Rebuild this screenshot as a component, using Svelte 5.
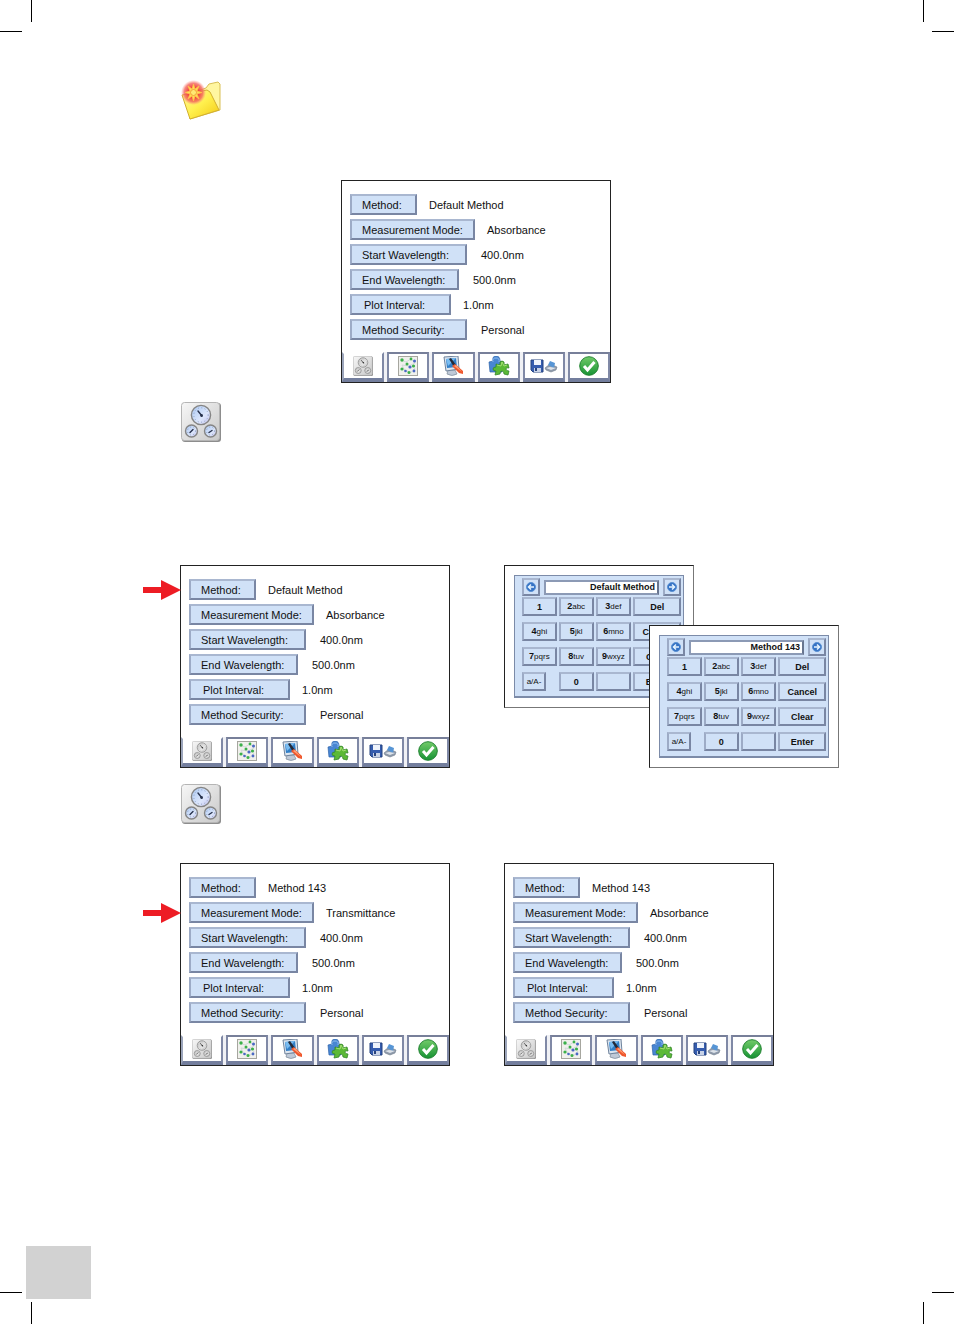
<script>
  const base = [
    { label: "Method:", value: "Default Method", size: "xs" },
    { label: "Measurement Mode:", value: "Absorbance", size: "xl" },
    { label: "Start Wavelength:", value: "400.0nm", size: "lg" },
    { label: "End Wavelength:", value: "500.0nm", size: "md" },
    { label: "Plot Interval:", value: "1.0nm", size: "sm" },
    { label: "Method Security:", value: "Personal", size: "lg" },
  ];

  // Same parameter list with the method name and mode replaced
  function withMethod(name, mode) {
    return base.map((row, i) => {
      if (i === 0) return { ...row, value: name };
      if (i === 1) return { ...row, value: mode };
      return row;
    });
  }

  const tabs = ["Parameters", "Samples", "Display", "Utilities", "Save and print", "Accept"];

  const keys = [
    { digit: "1" },
    { digit: "2", letters: "abc" },
    { digit: "3", letters: "def" },
    { word: "Del" },
    { digit: "4", letters: "ghi" },
    { digit: "5", letters: "jkl" },
    { digit: "6", letters: "mno" },
    { word: "Cancel" },
    { digit: "7", letters: "pqrs" },
    { digit: "8", letters: "tuv" },
    { digit: "9", letters: "wxyz" },
    { word: "Clear" },
    { letters: "a/A-", narrow: true },
    { digit: "0" },
    {},
    { word: "Enter" },
  ];
</script>

{#snippet gauges()}
  <svg viewBox="0 0 40 40" aria-hidden="true">
    <rect x="1" y="1" width="39" height="39" rx="3" fill="#8d8d8d" />
    <rect x="0.5" y="0.5" width="38" height="38" rx="3" fill="url(#plate)" stroke="#b5b5b5" />
    <g fill="url(#dial)" stroke="#858585" stroke-width="1.4">
      <circle cx="20" cy="13" r="9.6" />
      <circle cx="10.5" cy="29" r="6" />
      <circle cx="29.5" cy="29" r="6" />
    </g>
    <g fill="none" stroke="#8fa0c4" stroke-width="1" stroke-dasharray="1 2.4">
      <circle cx="20" cy="13" r="7.2" />
      <circle cx="10.5" cy="29" r="4" />
      <circle cx="29.5" cy="29" r="4" />
    </g>
    <g stroke="#27324d" stroke-width="1.4" stroke-linecap="round">
      <path d="M21 14l-4-5M9 30.500l3-3M28 30.500l3-2" />
      <circle cx="20.500" cy="13.500" r=".7" />
    </g>
  </svg>
{/snippet}

{#snippet tabIcon(index)}
  {#if index === 0}
    <span class="icon square faded">{@render gauges()}</span>
  {:else if index === 1}
    <svg class="icon square" viewBox="0 0 20 20" aria-hidden="true">
      <rect x="0.5" y="0.5" width="19" height="19" fill="#f0f0ec" stroke="#a6a69f" />
      <path d="M3 4l5 2 5-3 4 4-6 3-7-1 3 6 7 1 3-4" fill="none" stroke="#d3d8da" />
      <g fill="#3bb04a">
        <circle cx="4" cy="4" r="1.700" /><circle cx="13" cy="3" r="1.400" />
        <circle cx="9" cy="8" r="1.500" /><circle cx="4" cy="13" r="1.600" />
        <circle cx="15.500" cy="10" r="1.600" /><circle cx="11" cy="16.500" r="1.500" />
      </g>
      <g fill="#4a68c4">
        <circle cx="16.500" cy="5" r="1.500" /><circle cx="12" cy="11" r="1.600" />
        <circle cx="7.500" cy="15" r="1.300" /><circle cx="16" cy="15" r="1.400" />
      </g>
    </svg>
  {:else if index === 2}
    <svg class="icon" viewBox="0 0 22 20" aria-hidden="true">
      <path d="M6 14h7l2 4q-5 3-10 0z" fill="#bfc9d7" stroke="#7b8999" stroke-width=".7" />
      <path d="M2 1l14-1 1 13-13 2z" fill="#dce5ef" stroke="#70839c" />
      <path d="M4 3l10-1 1 9-10 1z" fill="#327fc7" />
      <path d="M4 3l10-1-8 8z" fill="#79bcf1" />
      <path d="M7 3l2-1 5 7-2 2z" fill="#252a38" />
      <path d="M10 10l3-2 8 7 0 3-4-1z" fill="#ef572d" />
      <path d="M12 10l2-1 6 7z" fill="#ffa176" />
    </svg>
  {:else if index === 3}
    <svg class="icon" viewBox="0 0 22 20" aria-hidden="true">
      <path d="M1 6l4-1q-1-5 3-5t4 5l2 1v10H2z" fill="#4886d3" stroke="#2c62a7" stroke-width=".7" />
      <path d="M5 6q-1-4 3-4t3 4" fill="none" stroke="#8dbbee" />
      <path
        d="M8 8l4 1q-1-4 2-4t2 4l4-1 1 4q-3-1-3 1t3 2l-1 4-4-1q0-3-2-3t-2 3l-5 1 1-4q-3 0-3-2t3-2z"
        fill="#5bb936"
        stroke="#32852a"
        stroke-width=".8"
      />
      <path d="M9 9l4 1 1-4 2 4 3-1" fill="none" stroke="#a4df72" />
    </svg>
  {:else if index === 4}
    <svg class="icon wide" viewBox="0 0 28 16" aria-hidden="true">
      <path d="M1 2h12v12H3l-2-2z" fill="#355cae" stroke="#24427f" />
      <path d="M4 2h7v5H4z" fill="#eef3fb" />
      <path d="M4 10h7v4H4z" fill="#c7d2e7" />
      <path d="M5 10h2v3H5z" fill="#28437d" />
      <path d="M15 10l5-4 7 3-1 3-5 2-5-2z" fill="#8e9aab" stroke="#717d8d" stroke-width=".6" />
      <path d="M18 7l2-4 5 2-1 5z" fill="#5795d5" />
      <path d="M16 10l5 2 5-2-6-1z" fill="#dde3ea" />
    </svg>
  {:else}
    <svg class="icon square" viewBox="0 0 20 20" aria-hidden="true">
      <circle cx="10" cy="10" r="9.300" fill="url(#accept)" stroke="#228332" />
      <path d="M5 10l3.500 4L15.500 6" fill="none" stroke="#fff" stroke-width="3" />
    </svg>
  {/if}
{/snippet}

{#snippet screen(rows, marked)}
  <section class="screen">
    <div class="rows">
      {#each rows as row, i}
        <div class="row">
          {#if marked === i}
            <svg class="pointer" viewBox="0 0 38 20" aria-hidden="true">
              <path d="M0 7h18V0l20 10-20 10v-7H0z" fill="#ed1c24" />
            </svg>
          {/if}
          <button class="param {row.size}">{row.label}</button>
          <span>{row.value}</span>
        </div>
      {/each}
    </div>
    <nav class="tabs">
      {#each tabs as tab, i}
        <button class="tab" class:active={i === 0} aria-label={tab}>{@render tabIcon(i)}</button>
      {/each}
    </nav>
  </section>
{/snippet}

{#snippet arrowKey(label, next)}
  <button class="key arrow" aria-label={label}>
    <svg viewBox="0 0 10 10" class:next aria-hidden="true">
      <circle cx="5" cy="5" r="4.500" fill="#3472c5" stroke="#5b91d2" />
      <path d="M8 5H3M5 2.500L2.500 5 5 7.500" fill="none" stroke="#e5f4ff" stroke-width="1.500" />
    </svg>
  </button>
{/snippet}

{#snippet keypad(value)}
  <div class="keypad">
    <div class="entry">
      {@render arrowKey("Previous", false)}
      <input type="text" aria-label="Method name" {value} />
      {@render arrowKey("Next", true)}
    </div>
    <div class="keys">
      {#each keys as key}
        <button class="key" class:narrow={key.narrow} aria-label={key.digit || key.word || key.letters ? undefined : "Space"}>
          {#if key.word}<b>{key.word}</b>{/if}{#if key.digit}<b>{key.digit}</b>{/if}{#if key.letters}<small>{key.letters}</small>{/if}
        </button>
      {/each}
    </div>
  </div>
{/snippet}

<svg class="defs" width="0" height="0" aria-hidden="true">
  <defs>
    <linearGradient id="plate" x1="0" y1="0" x2="1" y2="1">
      <stop offset="0" stop-color="#f7f7f7" />
      <stop offset="1" stop-color="#c9c9c9" />
    </linearGradient>
    <linearGradient id="dial" x1="0" y1="0" x2="1" y2="1">
      <stop offset="0" stop-color="#a9c8f3" />
      <stop offset="0.6" stop-color="#dce6fb" />
      <stop offset="1" stop-color="#c3c1ed" />
    </linearGradient>
    <linearGradient id="accept" x1="0" y1="0" x2="0" y2="1">
      <stop offset="0" stop-color="#72cb69" />
      <stop offset="1" stop-color="#169234" />
    </linearGradient>
    <linearGradient id="folder" x1="0" y1="0" x2="1" y2="1">
      <stop offset="0" stop-color="#fffaa0" />
      <stop offset="0.5" stop-color="#fff04e" />
      <stop offset="1" stop-color="#f2c813" />
    </linearGradient>
    <radialGradient id="glow">
      <stop offset="0.4" stop-color="#f0413a" />
      <stop offset="0.75" stop-color="#f4685e" stop-opacity="0.8" />
      <stop offset="1" stop-color="#ff8c80" stop-opacity="0" />
    </radialGradient>
  </defs>
</svg>

<div class="page">
  <i class="crop top left"></i>
  <i class="crop top right"></i>
  <i class="crop bottom left"></i>
  <i class="crop bottom right"></i>

  <main>
    <div class="badge">
      <svg viewBox="0 0 40 40" aria-hidden="true">
        <path d="M8 14l17-6 3-4 9-2 2 2v26l-30 9z" fill="#fff6a0" stroke="#d9bf55" />
        <path d="M1 15l25-5 3 2 9 18-29 9z" fill="url(#folder)" stroke="#d3b02f" />
        <circle cx="12.500" cy="12.500" r="12.500" fill="url(#glow)" />
        <path
          d="M12.500 4l1.500 5 4-3-2 5 5 1.500-5 1.500 2 5-4-3-1.500 5-1.500-5-4 3 2-5-5-1.500 5-1.500-2-5 4 3z"
          fill="#ffdc54"
          stroke="#ffc04a"
          stroke-width=".8"
        />
        <circle cx="12.500" cy="12.500" r="3" fill="#ffe873" stroke="#f2a43a" />
      </svg>
    </div>
    <div class="figures single">{@render screen(base, -1)}</div>

    <div class="badge">{@render gauges()}</div>
    <div class="figures entry-step">
      {@render screen(base, 0)}
      <div class="keypads">
        {@render keypad("Default Method")}
        {@render keypad("Method 143")}
      </div>
    </div>

    <div class="badge">{@render gauges()}</div>
    <div class="figures mode-step">
      {@render screen(withMethod("Method 143", "Transmittance"), 1)}
      {@render screen(withMethod("Method 143", "Absorbance"), -1)}
    </div>
  </main>

  <footer><div class="folio"></div></footer>
</div>

<style>
  :global(body) {
    margin: 0;
    background: #fff;
  }

  .defs {
    position: absolute;
  }

  .page {
    position: relative;
    box-sizing: border-box;
    min-height: 100vh;
    padding: 80px 0 25px;
    display: flex;
    flex-direction: column;
    font-family: "Liberation Sans", Arial, sans-serif;
    font-size: 11px;
    color: #111;
    overflow: hidden;
  }

  main {
    flex: 1;
    padding: 0 182px 0 180px;
  }

  button {
    box-sizing: border-box;
    margin: 0;
    padding: 0;
    font: inherit;
    color: inherit;
    cursor: pointer;
  }

  svg {
    display: block;
  }

  /* printer's crop marks */
  .crop {
    position: absolute;
    width: 32px;
    height: 32px;
  }

  .crop::before,
  .crop::after {
    content: "";
    position: absolute;
    background: #000;
  }

  .crop::before {
    width: 22px;
    height: 1px;
  }

  .crop::after {
    width: 1px;
    height: 22px;
  }

  .top {
    top: 0;
  }

  .bottom {
    bottom: 0;
  }

  .left {
    left: 0;
  }

  .right {
    right: 0;
  }

  .top::before {
    bottom: 0;
  }

  .top::after {
    top: 0;
  }

  .bottom::before {
    top: 0;
  }

  .bottom::after {
    bottom: 0;
  }

  .left::before {
    left: 0;
  }

  .left::after {
    right: 0;
  }

  .right::before {
    right: 0;
  }

  .right::after {
    left: 1px;
  }

  .badge {
    width: 40px;
    height: 40px;
    margin-left: 1px;
  }

  .figures {
    display: flex;
    gap: 54px;
  }

  .single {
    justify-content: center;
    margin: 60px 0 19px;
  }

  .entry-step {
    margin: 123px 0 16px;
  }

  .mode-step {
    margin-top: 39px;
  }

  .screen {
    box-sizing: border-box;
    flex: none;
    width: 270px;
    border: 1px solid #222;
    background: #fff;
  }

  .rows {
    display: grid;
    gap: 4px;
    padding: 13px 8px 12px;
  }

  .row {
    position: relative;
    display: flex;
    align-items: center;
    gap: 12px;
  }

  .param {
    height: 21px;
    padding: 0 10px;
    text-align: left;
    white-space: nowrap;
    background: #d0e1f7;
    border: 2px solid;
    border-color: #a9b7d0 #7986a3 #7986a3 #9dabc6;
  }

  .xs {
    width: 67px;
  }

  .sm {
    width: 101px;
    padding: 0 12px;
  }

  .md {
    width: 109px;
  }

  .lg {
    width: 117px;
  }

  .lg + span,
  .md + span {
    margin-left: 2px;
  }

  .xl {
    width: 125px;
  }

  .pointer {
    position: absolute;
    right: 100%;
    width: 38px;
    height: 20px;
    margin-right: 8px;
  }

  .tabs {
    display: flex;
    gap: 3px;
    background: #f0f1f5;
  }

  .tab {
    flex: 1;
    display: flex;
    align-items: center;
    justify-content: center;
    height: 30px;
    background: #fff;
    border: 2px solid #8089a6;
    border-top-color: #777f99;
    border-bottom: 4px solid #737e9d;
  }

  .active {
    border-top-color: #fff;
    border-left-color: #9ca5bb;
  }

  .icon {
    flex: none;
    width: 22px;
    height: 20px;
  }

  .square {
    width: 20px;
  }

  .wide {
    width: 28px;
    height: 16px;
  }

  .faded {
    filter: grayscale(1);
  }

  .keypads {
    position: relative;
    flex: none;
    width: 270px;
  }

  .keypad {
    box-sizing: border-box;
    width: 190px;
    padding: 9px;
    background: #fff;
    border: 1px solid;
    border-color: #222 #777 #777 #222;
  }

  .keypad + .keypad {
    position: absolute;
    top: 60px;
    left: 145px;
  }

  .entry,
  .keys {
    background: #d0e1f7;
    border: 1px solid #7c8ba8;
  }

  .entry {
    display: flex;
    align-items: center;
    gap: 4px;
    padding: 2px 2px 1px 7px;
    border-bottom: 0;
  }

  .entry input {
    box-sizing: border-box;
    flex: 1;
    min-width: 0;
    height: 15px;
    padding: 0 2px;
    border: 2px solid #8c9ab5;
    border-right-color: #68758f;
    background: #fff;
    color: #111;
    font: bold 9px "Liberation Sans", Arial, sans-serif;
    text-align: right;
  }

  .keys {
    display: grid;
    grid-template-columns: 35fr 35fr 36fr 48fr;
    gap: 6px 2px;
    padding: 0 2px 5px 7px;
    border-top: 0;
    border-bottom-width: 2px;
  }

  .key {
    height: 19px;
    font-size: 9px;
    line-height: 14px;
    white-space: nowrap;
    background: #d0e1f7;
    border: 2px solid;
    border-color: #a9b7d0 #7986a3 #7986a3 #9dabc6;
  }

  .key small {
    font-size: 8px;
  }

  .narrow {
    width: 24px;
  }

  .arrow {
    display: grid;
    place-items: center;
    width: 18px;
    height: 18px;
  }

  .arrow svg {
    width: 10px;
    height: 10px;
  }

  .next {
    transform: scaleX(-1);
  }

  .folio {
    width: 65px;
    height: 53px;
    margin-left: 26px;
    background: #d2d2d2;
  }
</style>
